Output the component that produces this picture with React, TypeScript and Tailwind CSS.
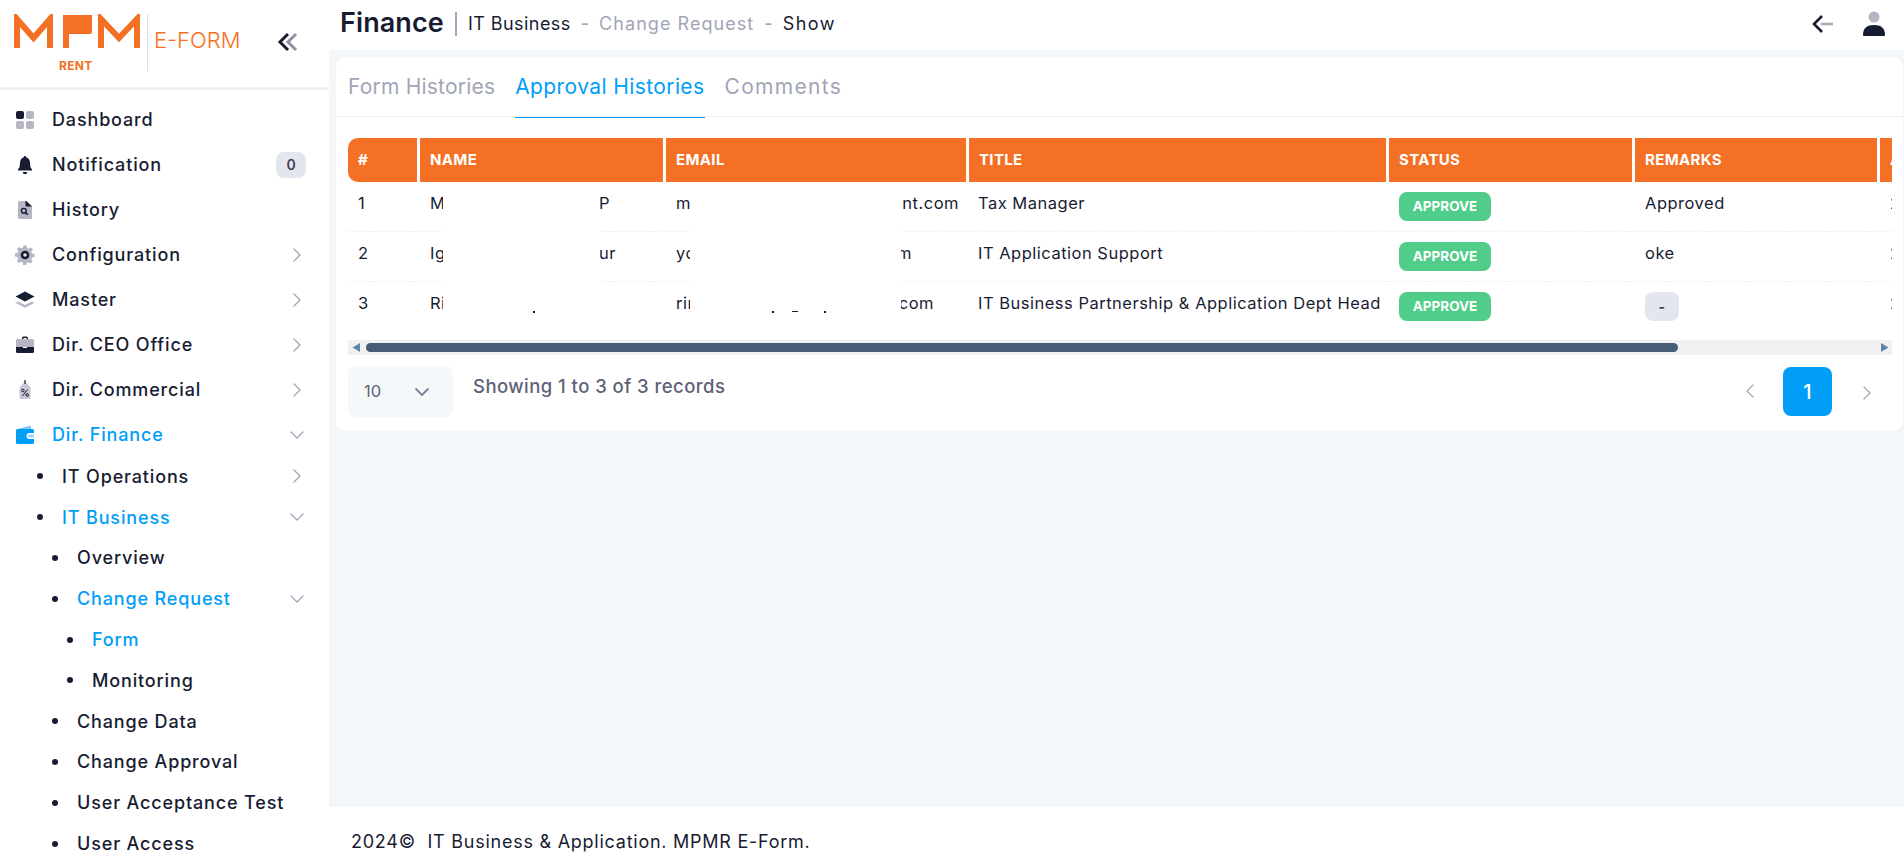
import React from "react";
import { ChevronRight, ChevronDown, ChevronLeft } from "lucide-react";

const FONT = "font-['Inter','Liberation_Sans',sans-serif]";

const IconDashboard = () => (
  <svg width="20" height="20" viewBox="0 0 20 20">
    <rect x="1" y="1" width="8" height="8" rx="2" fill="#181c32" />
    <rect x="11" y="1" width="8" height="8" rx="2" fill="#b5b5c3" />
    <rect x="1" y="11" width="8" height="8" rx="2" fill="#b5b5c3" />
    <rect x="11" y="11" width="8" height="8" rx="2" fill="#b5b5c3" />
  </svg>
);
const IconBell = () => (
  <svg width="20" height="20" viewBox="0 0 20 20">
    <path d="M10 1c.8 0 1.2.6 1.2 1.3 2.4.7 3.6 2.800 3.800 5.400l.4 4.300 1.600 2.500v1H3v-1l1.600-2.500.4-4.300C5.200 5.100 6.400 3 8.800 2.300 8.800 1.600 9.200 1 10 1z" fill="#181c32" />
    <path d="M7.800 17h4.400a2.200 2.200 0 0 1-4.400 0z" fill="#181c32" />
  </svg>
);
const IconHistory = () => (
  <svg width="20" height="20" viewBox="0 0 20 20">
    <path d="M3 2.500A1.500 1.500 0 0 1 4.500 1H12l5 5v11.500a1.500 1.500 0 0 1-1.500 1.500h-11A1.500 1.500 0 0 1 3 17.500z" fill="#b5b5c3" />
    <path d="M10.500 0.500 17 6.500h-5a1.500 1.500 0 0 1-1.500-1.500z" fill="#181c32" />
    <circle cx="8.800" cy="10.800" r="2.400" fill="none" stroke="#181c32" strokeWidth="1.400" />
    <path d="M10.600 12.600l2.200 2.200" stroke="#181c32" strokeWidth="1.500" />
  </svg>
);
const IconGear = () => (
  <svg width="20" height="20" viewBox="0 0 20 20">
    <path d="M8.500 0.500h3l.5 2.500 1.800.8 2.200-1.400 2.100 2.100L16.200 6.700l.8 1.800 2.500.5v3l-2.500.5-.8 1.800 1.400 2.200-2.100 2.100-2.200-1.400-1.800.8-.5 2.500h-3L8 17.500l-1.800-.8L4 18.100 1.900 16l1.400-2.200-.8-1.800L0 11.500v-3l2.500-.5.800-1.800L1.900 4 4 1.900l2.200 1.400L8 2.500z" fill="#b5b5c3" />
    <circle cx="10" cy="10" r="4.300" fill="#181c32" />
    <circle cx="10" cy="10" r="1.800" fill="#e4e6ef" />
  </svg>
);
const IconLayers = () => (
  <svg width="20" height="20" viewBox="0 0 20 20">
    <path d="M10 1.500 19.500 6.500 10 11.500.5 6.500z" fill="#181c32" />
    <path d="M.5 11l2.500-1.300 7 3.600 7-3.600 2.500 1.300L10 16 .5 11z" fill="#b5b5c3" transform="translate(0 1.800)" />
  </svg>
);
const IconBriefcase = () => (
  <svg width="20" height="20" viewBox="0 0 20 20">
    <path d="M7 4V3a1.500 1.500 0 0 1 1.500-1.500h3A1.500 1.500 0 0 1 13 3v1h-1.500V3h-3v1z" fill="#181c32" />
    <path d="M1 5.500A1.500 1.500 0 0 1 2.500 4h15A1.500 1.500 0 0 1 19 5.500V12H1z" fill="#b5b5c3" />
    <path d="M1 12h7v1h4v-1h7v4.500a1.500 1.500 0 0 1-1.500 1.500h-15A1.500 1.500 0 0 1 1 16.500z" fill="#181c32" />
  </svg>
);
const IconTag = () => (
  <svg width="20" height="20" viewBox="0 0 20 20">
    <path d="M7.500 4l2.500-2 2.500 2 3 3.500V18a1 1 0 0 1-1 1H5.500a1 1 0 0 1-1-1V7.500z" fill="#c8c8d3" />
    <path d="M10 0v4" stroke="#181c32" strokeWidth="1.200" />
    <circle cx="7.800" cy="10.500" r="1.300" fill="none" stroke="#181c32" strokeWidth="1" />
    <circle cx="12.200" cy="15" r="1.300" fill="none" stroke="#181c32" strokeWidth="1" />
    <path d="M12.500 9.500l-5 6.500" stroke="#181c32" strokeWidth="1" />
  </svg>
);
const IconWallet = () => (
  <svg width="20" height="20" viewBox="0 0 20 20">
    <path d="M4 3.500 16 0.500V5H4z" fill="#7cc8f8" />
    <path d="M1 5.500A1.500 1.500 0 0 1 2.500 4H17.500A1.500 1.500 0 0 1 19 5.500V8h-4.500a3 3 0 0 0 0 6H19v3.500a1.500 1.500 0 0 1-1.500 1.500h-15A1.500 1.500 0 0 1 1 17.500z" fill="#009ef7" />
    <rect x="13" y="9.500" width="6" height="3" rx="1.500" fill="#8fd2fb" />
  </svg>
);

function TopItem({ icon, label, active, right }: { icon: React.ReactNode; label: string; active?: boolean; right?: React.ReactNode }) {
  return (
    <div className="flex h-[45px] items-center pl-[15px] pr-[20px]">
      <span className="flex w-[37px] shrink-0">{icon}</span>
      <span className={`text-[18px] font-medium tracking-[0.85px] ${active ? "text-[#009ef7]" : "text-[#181c32]"}`}>{label}</span>
      <span className="ml-auto flex">{right}</span>
    </div>
  );
}

function SubItem({ label, level, active, right }: { label: string; level: 1 | 2 | 3; active?: boolean; right?: React.ReactNode }) {
  const pad = level === 1 ? "pl-[37px]" : level === 2 ? "pl-[52px]" : "pl-[67px]";
  return (
    <div className={`flex h-[40.800px] items-center pr-[20px] ${pad}`}>
      <span className="mr-[19px] h-[6px] w-[6px] shrink-0 rounded-full bg-[#181c32]" />
      <span className={`text-[18px] font-medium tracking-[0.85px] ${active ? "text-[#009ef7]" : "text-[#181c32]"}`}>{label}</span>
      <span className="ml-auto flex">{right}</span>
    </div>
  );
}

const CR = () => <ChevronRight size={24} strokeWidth={1.300} className="text-[#a1a5b7]" />;
const CD = () => <ChevronDown size={24} strokeWidth={1.300} className="text-[#a1a5b7]" />;

function Sidebar() {
  return (
    <aside className="flex h-full w-[329px] shrink-0 flex-col overflow-hidden bg-white">
      <div className="flex h-[90px] shrink-0 items-start border-b-[3px] border-[#eff2f5] pl-[14px]">
        <svg width="128" height="36" viewBox="0 0 128 36" className="mt-[14px] shrink-0">
          <path d="M3 34V5L19.500 24 36 5v29" fill="none" stroke="#f37024" strokeWidth="6" strokeLinejoin="miter" />
          <path d="M49 34V1h29v17a2 2 0 0 1-2 2H55v14z" fill="#f37024" />
          <path d="M87 34V5L105 24 123 5v29" fill="none" stroke="#f37024" strokeWidth="6" />
        </svg>
        <div className="absolute left-[59px] top-[58px] text-[12px] font-bold leading-[16px] tracking-[0.3px] text-[#f37024]">RENT</div>
        <div className="ml-[5px] mt-[14px] h-[57px] w-px shrink-0 bg-[#dfe1e8]" />
        <div className="ml-[6px] mt-[26px] text-[22px] font-light leading-[28px] text-[#f37024]">E-FORM</div>
        <svg width="22" height="20" viewBox="0 0 22 20" className="ml-[37px] mt-[32px] shrink-0">
          <path d="M11 2 3 10l8 8" fill="none" stroke="#181c32" strokeWidth="3" />
          <path d="M19 2l-8 8 8 8" fill="none" stroke="#8e91a3" strokeWidth="3" />
        </svg>
      </div>
      <nav className="flex flex-col pt-[7px]">
        <TopItem icon={<IconDashboard />} label="Dashboard" />
        <TopItem
          icon={<IconBell />}
          label="Notification"
          right={<span className="mr-[3px] flex h-[26px] w-[30px] items-center justify-center rounded-[8px] bg-[#e4e6ef] text-[14px] font-semibold text-[#3f4254]">0</span>}
        />
        <TopItem icon={<IconHistory />} label="History" />
        <TopItem icon={<IconGear />} label="Configuration" right={<CR />} />
        <TopItem icon={<IconLayers />} label="Master" right={<CR />} />
        <TopItem icon={<IconBriefcase />} label="Dir. CEO Office" right={<CR />} />
        <TopItem icon={<IconTag />} label="Dir. Commercial" right={<CR />} />
        <TopItem icon={<IconWallet />} label="Dir. Finance" active right={<CD />} />
        <div className="-mt-[1px] flex flex-col">
          <SubItem level={1} label="IT Operations" right={<CR />} />
          <SubItem level={1} label="IT Business" active right={<CD />} />
          <SubItem level={2} label="Overview" />
          <SubItem level={2} label="Change Request" active right={<CD />} />
          <SubItem level={3} label="Form" active />
          <SubItem level={3} label="Monitoring" />
          <SubItem level={2} label="Change Data" />
          <SubItem level={2} label="Change Approval" />
          <SubItem level={2} label="User Acceptance Test" />
          <SubItem level={2} label="User Access" />
        </div>
      </nav>
    </aside>
  );
}

function Header() {
  return (
    <header className="flex h-[50px] shrink-0 items-center bg-white pb-[3px] pl-[11px] pr-[18px]">
      <span className="text-[27px] font-semibold tracking-[0.1px] text-[#181c32]">Finance</span>
      <span className="ml-[11px] h-[24px] w-[2px] bg-[#a1a5b7]" />
      <span className="ml-[11px] text-[18px] font-normal tracking-[0.45px] text-[#181c32]">IT Business</span>
      <span className="ml-[10px] text-[18px] font-medium text-[#a1a5b7]">-</span>
      <span className="ml-[10px] text-[18px] font-normal tracking-[1.05px] text-[#a1a5b7]">Change Request</span>
      <span className="ml-[10px] text-[18px] font-medium text-[#a1a5b7]">-</span>
      <span className="ml-[10px] text-[18px] font-normal tracking-[1.5px] text-[#181c32]">Show</span>
      <svg width="24" height="24" viewBox="0 0 24 24" className="ml-auto shrink-0">
        <path d="M11 12h12" stroke="#a9abbb" strokeWidth="2.600" />
        <path d="M12 4l-8 8 8 8" fill="none" stroke="#181c32" strokeWidth="2.600" />
      </svg>
      <svg width="24" height="28" viewBox="0 0 24 28" className="ml-[28px] shrink-0">
        <circle cx="12" cy="7" r="5.500" fill="#b5b5c3" />
        <path d="M1 25c0-7 4-10 11-10s11 3 11 10a1 1 0 0 1-1 1H2a1 1 0 0 1-1-1z" fill="#181c32" />
      </svg>
    </header>
  );
}

const COLS = "grid-cols-[69px_243px_300px_417px_243px_242px_120px]";
const CELL = "pl-[10px] pt-[10px] text-[16.500px] tracking-[0.5px] leading-[22px] text-[#181c32]";

function NameCell({ a, b }: { a: string; b: string }) {
  return (
    <div className={`flex ${CELL}`}>
      <span className="w-[169px] shrink-0">{a}</span>
      <span>{b}</span>
    </div>
  );
}

function EmailCell({ a, b, w }: { a: string; b: string; w: string }) {
  return (
    <div className={`flex ${CELL}`}>
      <span className="w-[14px] shrink-0 overflow-hidden whitespace-nowrap">{a}</span>
      <span className="w-[211px] shrink-0" />
      <span className={`flex shrink-0 justify-end overflow-hidden whitespace-nowrap ${w}`}>{b}</span>
    </div>
  );
}

const rows = [
  { n: "1", a: "M", b: "P", ea: "mi", eb: "nt.com", w: "w-[58px]", t: "Tax Manager", r: "Approved" },
  { n: "2", a: "Ig", b: "ur", ea: "yo", eb: "m", w: "w-[11px]", t: "IT Application Support", r: "oke" },
  { n: "3", a: "Ri", b: "", ea: "rin", eb: "com", w: "w-[33px]", t: "IT Business Partnership & Application Dept Head", r: "-" },
];

function Table() {
  const head = ["#", "NAME", "EMAIL", "TITLE", "STATUS", "REMARKS", "A"];
  return (
    <div className="relative mt-[21px] w-[1544px] overflow-hidden">
      <div className={`grid ${COLS} gap-x-[3px]`}>
        {head.map((h, i) => (
          <div
            key={h}
            className={`flex h-[44px] items-center bg-[#f37024] pl-[10px] text-[15px] font-bold tracking-[0.35px] text-white ${i === 0 ? "rounded-l-[10px]" : ""}`}
          >
            {h}
          </div>
        ))}
      </div>
      {rows.map((r, i) => (
        <div key={r.n} className={`grid ${COLS} h-[50px] gap-x-[3px] ${i < 2 ? "border-b border-dashed border-[#eff2f5]" : ""}`}>
          <div className={CELL}>{r.n}</div>
          <NameCell a={r.a} b={r.b} />
          <EmailCell a={r.ea} b={r.eb} w={r.w} />
          <div className={`whitespace-nowrap ${CELL} !pl-[9px]`}>{r.t}</div>
          <div className="pl-[10px] pt-[10px]">
            <span className="flex h-[29px] w-[92px] items-center justify-center rounded-[8px] bg-[#50cd89] text-[13.500px] font-bold text-white">APPROVE</span>
          </div>
          <div className={CELL}>
            {r.r === "-" ? (
              <span className="flex h-[29px] w-[34px] items-center justify-center rounded-[8px] bg-[#e4e6ef] text-[14px] font-bold text-[#3f4254]">-</span>
            ) : (
              r.r
            )}
          </div>
          <div className={CELL}>2</div>
        </div>
      ))}
      <div className="absolute left-[95px] top-[54px] h-[118px] w-[157px] bg-white" />
      <div className="absolute left-[342px] top-[54px] h-[118px] w-[211px] bg-white" />
      <div className="absolute left-[185px] top-[173px] h-[2px] w-[2px] bg-[#181c32]" />
      <div className="absolute left-[424px] top-[173px] h-[2px] w-[2px] bg-[#181c32]" />
      <div className="absolute left-[444px] top-[173px] h-[1px] w-[6px] bg-[#181c32]" />
      <div className="absolute left-[476px] top-[173px] h-[2px] w-[2px] bg-[#181c32]" />
      <div className="mt-[8px] flex h-[15px] items-center bg-[#f1f1f1]">
        <svg width="18" height="15" viewBox="0 0 18 15" className="shrink-0">
          <path d="M12 3v9L4.500 7.500z" fill="#5f86ad" />
        </svg>
        <div className="h-[9px] w-[1312px] rounded-full bg-[#475c75]" />
        <svg width="16" height="15" viewBox="0 0 16 15" className="ml-auto shrink-0">
          <path d="M5 3v9l7.500-4.500z" fill="#5f86ad" />
        </svg>
      </div>
    </div>
  );
}

function Card() {
  return (
    <section className="ml-[7px] mr-[1px] mt-[7px] h-[374px] rounded-[10px] bg-white pl-[12px]">
      <div className="-ml-[12px] flex h-[60px] border-b border-[#eff2f5] pl-[12px]">
        <span className="flex h-[60px] items-center text-[21px] tracking-[0.2px] text-[#a1a5b7]">Form Histories</span>
        <span className="ml-[20px] flex h-[61px] items-center border-b border-[#009ef7] text-[21px] tracking-[0.4px] text-[#009ef7]">Approval Histories</span>
        <span className="ml-[20px] flex h-[60px] items-center text-[21px] tracking-[1.3px] text-[#a1a5b7]">Comments</span>
      </div>
      <Table />
      <div className="mt-[11px] flex items-start pr-[24px]">
        <div className="flex h-[51px] w-[105px] items-center rounded-[8px] bg-[#f5f8fa] pl-[16px] pr-[19px] text-[16.500px] text-[#5e6278]">
          <span>10</span>
          <ChevronDown size={24} strokeWidth={1.800} className="ml-auto text-[#7e8299]" />
        </div>
        <span className="ml-[20px] mt-[7px] text-[18.500px] font-medium leading-[26px] tracking-[0.45px] text-[#5e6278]">Showing 1 to 3 of 3 records</span>
        <ChevronLeft size={24} strokeWidth={1.200} className="ml-auto mt-[13px] text-[#a1a5b7]" />
        <span className="ml-[21px] mt-[1px] flex h-[49px] w-[49px] items-center justify-center rounded-[8px] bg-[#009ef7] text-[20px] font-medium text-white">1</span>
        <ChevronRight size={24} strokeWidth={1.200} className="ml-[23px] mt-[15px] text-[#a1a5b7]" />
      </div>
    </section>
  );
}

export default function App() {
  return (
    <div className={`relative flex h-[867px] w-[1904px] overflow-hidden bg-white ${FONT}`}>
      <Sidebar />
      <main className="flex h-full min-w-0 flex-1 flex-col">
        <Header />
        <div className="flex-1 bg-[#f4f7fa]">
          <Card />
        </div>
        <footer className="flex h-[60px] shrink-0 items-center bg-white pl-[22px] pt-[8px] text-[18px] font-normal tracking-[0.75px] text-[#181c32]">
          2024©&nbsp;&nbsp;IT Business &amp; Application. MPMR E-Form.
        </footer>
      </main>
    </div>
  );
}
